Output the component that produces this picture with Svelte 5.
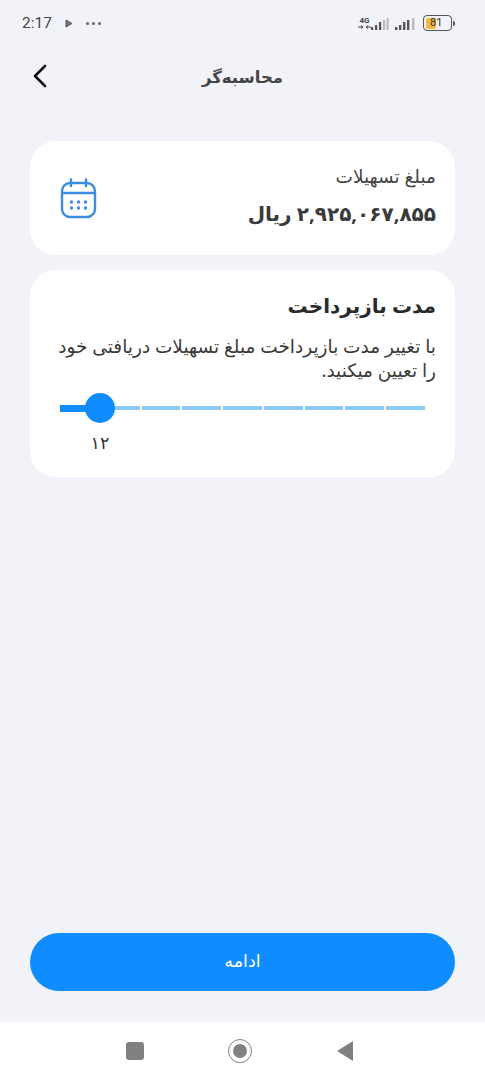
<script>
  let segments = Array(9).fill(0);
</script>

<div class="screen">
  <div class="status">
    <div class="status-left">
      <span class="time">2:17</span>
      <svg class="play" width="8" height="9" viewBox="0 0 8 9"><path d="M1 1 L7 4.5 L1 8 Z" fill="#777" stroke="#555" stroke-width="1"/></svg>
      <span class="dots"><i></i><i></i><i></i></span>
    </div>
    <div class="status-right">
      <span class="net">4G<svg width="13" height="4" viewBox="0 0 13 4"><path d="M0 2 H5 M3 0.5 L5 2 L3 3.5 M8 2 H13 M10 0.5 L8 2 L10 3.5" fill="none" stroke="#444" stroke-width="1"/></svg></span>
      <svg class="bars" width="18" height="14" viewBox="0 0 18 14"><g fill="#555"><rect x="0" y="10" width="2.2" height="3"/><rect x="4" y="8" width="2.2" height="5"/><rect x="8" y="5" width="2.2" height="8"/></g><g fill="#bbb"><rect x="12" y="3" width="2.2" height="10"/><rect x="15.5" y="1" width="2.2" height="12"/></g></svg>
      <svg class="bars second" width="20" height="14" viewBox="0 0 20 14"><g fill="#555"><rect x="0" y="10" width="2.4" height="3"/><rect x="4" y="8" width="2.4" height="5"/><rect x="8" y="5" width="2.4" height="8"/><rect x="12" y="3" width="2.4" height="10"/></g><rect x="17" y="1" width="2.4" height="12" fill="#bbb"/></svg>
      <span class="battery"><span class="level"></span><span class="pct">81</span></span>
      <span class="nub"></span>
    </div>
  </div>

  <header class="topbar">
    <svg class="back" width="16" height="24" viewBox="0 0 16 24"><path d="M13 2 L3 12 L13 22" fill="none" stroke="#111" stroke-width="2.6" stroke-linecap="round" stroke-linejoin="round"/></svg>
    <h1 dir="rtl">محاسبه‌گر</h1>
  </header>

  <section class="card amount">
    <div class="amount-text" dir="rtl">
      <div class="label">مبلغ تسهیلات</div>
      <div class="value">۲,۹۲۵,۰۶۷,۸۵۵ ریال</div>
    </div>
    <svg class="calendar" width="37" height="41" viewBox="0 0 37 41" fill="none" stroke="#3a8fdc" stroke-width="2.4">
      <rect x="2" y="5" width="33" height="34" rx="8"/>
      <path d="M2 15 H35"/>
      <path d="M11 1.5 V8 M26 1.5 V8" stroke-linecap="round"/>
      <g fill="#3a8fdc" stroke="none">
        <circle cx="11.5" cy="24" r="1.7"/><circle cx="18.5" cy="24" r="1.7"/><circle cx="25.5" cy="24" r="1.7"/>
        <circle cx="11.5" cy="30" r="1.7"/><circle cx="18.5" cy="30" r="1.7"/><circle cx="25.5" cy="30" r="1.7"/>
      </g>
    </svg>
  </section>

  <section class="card term">
    <h2 dir="rtl">مدت بازپرداخت</h2>
    <p dir="rtl">با تغییر مدت بازپرداخت مبلغ تسهیلات دریافتی خود را تعیین میکنید.</p>
    <div class="slider">
      <div class="track">
        {#each segments as _}
          <span class="seg"></span>
        {/each}
      </div>
      <div class="fill"></div>
      <div class="thumb"></div>
    </div>
    <div class="slider-label">۱۲</div>
  </section>

  <div class="spacer"></div>

  <button class="cta">ادامه</button>

  <nav class="navbar">
    <span class="nav-square"></span>
    <span class="nav-circle"><i></i></span>
    <svg width="18" height="22" viewBox="0 0 18 22"><path d="M17 1 V21 L1 11 Z" fill="#808080"/></svg>
  </nav>
</div>

<style>
  :global(body) {
    margin: 0;
    background: #f1f3f8;
  }
  .screen {
    width: 485px;
    height: 1080px;
    display: flex;
    flex-direction: column;
    background: #f1f3f8;
    font-family: "Noto Sans", "DejaVu Sans", sans-serif;
    color: #333;
    overflow: hidden;
  }
  .status {
    height: 46px;
    display: flex;
    justify-content: space-between;
    align-items: center;
    padding: 0 30px 0 22px;
    box-sizing: border-box;
  }
  .status-left {
    display: flex;
    align-items: center;
    gap: 13px;
  }
  .time {
    font-family: Roboto, sans-serif;
    font-size: 15.5px;
    color: #444;
  }
  .dots {
    display: flex;
    gap: 3px;
  }
  .dots i {
    width: 3px;
    height: 3px;
    border-radius: 50%;
    background: #666;
  }
  .status-right {
    display: flex;
    align-items: center;
  }
  .net {
    display: flex;
    flex-direction: column;
    align-items: center;
    font-family: Roboto, sans-serif;
    font-size: 8px;
    line-height: 8px;
    font-weight: 700;
    color: #444;
  }
  .bars {
    margin-top: 1px;
  }
  .bars.second {
    margin-left: 6px;
  }
  .battery {
    position: relative;
    width: 24px;
    height: 11px;
    margin-left: 8px;
    border: 1.2px solid #555;
    border-radius: 4px;
    padding: 1.5px;
    box-sizing: content-box;
    display: flex;
  }
  .level {
    width: 10px;
    background: #f5b93c;
    border-radius: 2px;
  }
  .pct {
    position: absolute;
    left: 6px;
    top: 0;
    font-family: Roboto, sans-serif;
    font-size: 11px;
    line-height: 13px;
    color: #333;
  }
  .nub {
    width: 2px;
    height: 5px;
    margin-left: 1px;
    background: #555;
    border-radius: 0 2px 2px 0;
  }
  .topbar {
    position: relative;
    height: 60px;
    display: flex;
    align-items: center;
    justify-content: center;
  }
  .back {
    position: absolute;
    left: 32px;
    top: 18px;
  }
  h1 {
    margin: 0;
    font-size: 16.5px;
    font-weight: 700;
    color: #444;
  }
  .card {
    margin: 0 30px;
    background: #fff;
    border-radius: 26px;
    box-sizing: border-box;
  }
  .amount {
    margin-top: 35px;
    height: 114px;
    display: flex;
    flex-direction: row-reverse;
    justify-content: space-between;
    align-items: center;
    padding: 0 19px 0 30px;
  }
  .amount-text {
    margin-top: -4px;
  }
  .label {
    font-size: 18.5px;
    line-height: 24px;
    color: #444;
  }
  .value {
    margin-top: 11px;
    font-size: 20px;
    line-height: 30px;
    font-weight: 700;
    color: #3a3a3a;
  }
  .term {
    margin-top: 15px;
    height: 207px;
    padding: 22px 19px 0 30px;
  }
  h2 {
    margin: 0;
    font-size: 20px;
    font-weight: 700;
    color: #2a2a2a;
  }
  p {
    margin: 15px 0 0 -6px;
    font-size: 18.5px;
    line-height: 24px;
    color: #3a3a3a;
  }
  .slider {
    position: relative;
    height: 30px;
    margin-top: 11px;
    display: flex;
    align-items: center;
  }
  .track {
    display: flex;
    gap: 2px;
    width: 365px;
  }
  .seg {
    flex: 1;
    height: 4px;
    background: #8cc8f5;
  }
  .fill {
    position: absolute;
    left: 0;
    top: 11.5px;
    width: 40px;
    height: 7px;
    background: #0f8cff;
  }
  .thumb {
    position: absolute;
    left: 25px;
    top: 0;
    width: 30px;
    height: 30px;
    border-radius: 50%;
    background: #0f8cff;
  }
  .slider-label {
    width: 80px;
    text-align: center;
    margin-top: 7px;
    font-size: 17.5px;
  }
  .spacer {
    flex: 1;
  }
  .cta {
    margin: 0 30px 31px;
    height: 58px;
    padding: 0 0 4px;
    border: none;
    border-radius: 30px;
    background: #0f8cff;
    color: #fff;
    font-family: inherit;
    font-size: 17.5px;
  }
  .navbar {
    height: 58px;
    background: #fff;
    display: flex;
    justify-content: center;
    align-items: center;
    gap: 84px;
    padding-right: 5px;
  }
  .nav-square {
    width: 18px;
    height: 18px;
    border-radius: 3px;
    background: #808080;
  }
  .nav-circle {
    width: 24px;
    height: 24px;
    border-radius: 50%;
    border: 1.5px solid #808080;
    box-sizing: border-box;
    display: flex;
    align-items: center;
    justify-content: center;
  }
  .nav-circle i {
    width: 14px;
    height: 14px;
    border-radius: 50%;
    background: #808080;
  }
</style>
